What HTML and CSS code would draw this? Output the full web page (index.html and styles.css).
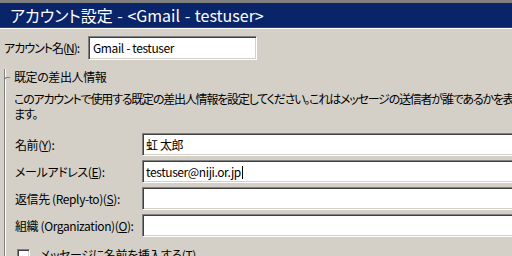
FILE: index.html
```html
<!DOCTYPE html>
<html lang="ja">
<head>
  <meta charset="UTF-8" />
  <title>アカウント設定</title>
  <link rel="stylesheet" href="styles.css">
</head>
<body>
  <div class="titlebar">アカウント設定 - &lt;Gmail - testuser&gt;</div>

  <div class="account-row">
    <label class="account-label">アカウント名(<u>N</u>):</label>
    <div class="field account-field">Gmail - testuser</div>
  </div>

  <div class="group">
    <div class="group-title">既定の差出人情報</div>
    <p class="desc">このアカウントで使用する既定の差出人情報を設定してください。これはメッセージの送信者が誰であるかを表<br>ます。</p>

    <div class="fields">
      <label>名前(<u>Y</u>):</label>
      <div class="field">虹 太郎</div>

      <label>メールアドレス(<u>E</u>):</label>
      <div class="field">testuser@niji.or.jp<span class="caret"></span></div>

      <label>返信先 (Reply-to)(<u>S</u>):</label>
      <div class="field"></div>

      <label>組織 (Organization)(<u>O</u>):</label>
      <div class="field"></div>
    </div>

    <div class="check-row">
      <span class="checkbox"></span>
      <span>メッセージに名前を挿入する(<u>T</u>)</span>
    </div>
  </div>
</body>
</html>
```

FILE: styles.css
```css
body {
  margin: 0;
  width: 512px;
  height: 256px;
  overflow: hidden;
  background: #d4d0c8;
  color: #000;
  font-family: "Noto Sans CJK JP", "Liberation Sans", sans-serif;
  font-size: 12px;
  line-height: 16px;
  font-feature-settings: "palt";
  letter-spacing: -0.4px;
}

label {
  white-space: nowrap;
}

.titlebar {
  border-top: 3px solid #808080;
  height: 24px;
  line-height: 24px;
  padding-left: 10px;
  background: #0a246a;
  color: #fff;
  font-size: 16px;
  letter-spacing: 0;
  word-spacing: 1px;
  box-shadow: 0 1px 0 #404040, 0 2px 0 #fff;
  white-space: nowrap;
}

.account-row {
  display: flex;
  align-items: center;
  margin-top: 9px;
  padding-left: 4px;
}

.account-label {
  flex-shrink: 0;
  width: 84px;
  letter-spacing: -1px;
}

.field {
  box-sizing: border-box;
  height: 23px;
  line-height: 19px;
  padding: 1px 0 0 3px;
  background: #fff;
  border-top: 1px solid #808080;
  border-left: 1px solid #808080;
  border-bottom: 1px solid #fff;
  border-right: 1px solid #fff;
  box-shadow: inset 1px 1px 0 #404040, inset -1px -1px 0 #d4d0c8;
  white-space: nowrap;
}

.account-field {
  width: 169px;
  height: 24px;
  padding-left: 4px;
}

.group {
  margin: 9px 0 0 4px;
  border-left: 1px solid #808080;
  box-shadow: inset 1px 0 0 #fff;
}

.group-title {
  display: flex;
  align-items: center;
  height: 16px;
  margin-left: -1px;
}

.group-title::before {
  content: "";
  width: 5px;
  height: 4px;
  margin-top: 4px;
  margin-right: 4px;
  border-top: 1px solid #808080;
  border-left: 1px solid #808080;
  border-top-left-radius: 3px;
}

.desc {
  margin: 6px 0 0 9px;
  line-height: 15px;
  letter-spacing: -1.2px;
  white-space: nowrap;
}

.fields {
  display: grid;
  grid-template-columns: 127px 380px;
  row-gap: 4px;
  align-items: center;
  margin: 12px 0 0 10px;
}

.caret {
  display: inline-block;
  width: 1px;
  height: 13px;
  margin-left: 1px;
  vertical-align: -2px;
  background: #000;
}

.check-row {
  display: flex;
  align-items: center;
  gap: 10px;
  margin: 10px 0 0 12px;
}

.checkbox {
  box-sizing: border-box;
  flex-shrink: 0;
  width: 13px;
  height: 13px;
  background: #fff;
  border-top: 1px solid #808080;
  border-left: 1px solid #808080;
  border-bottom: 1px solid #fff;
  border-right: 1px solid #fff;
  box-shadow: inset 1px 1px 0 #404040, inset -1px -1px 0 #d4d0c8;
}
```
